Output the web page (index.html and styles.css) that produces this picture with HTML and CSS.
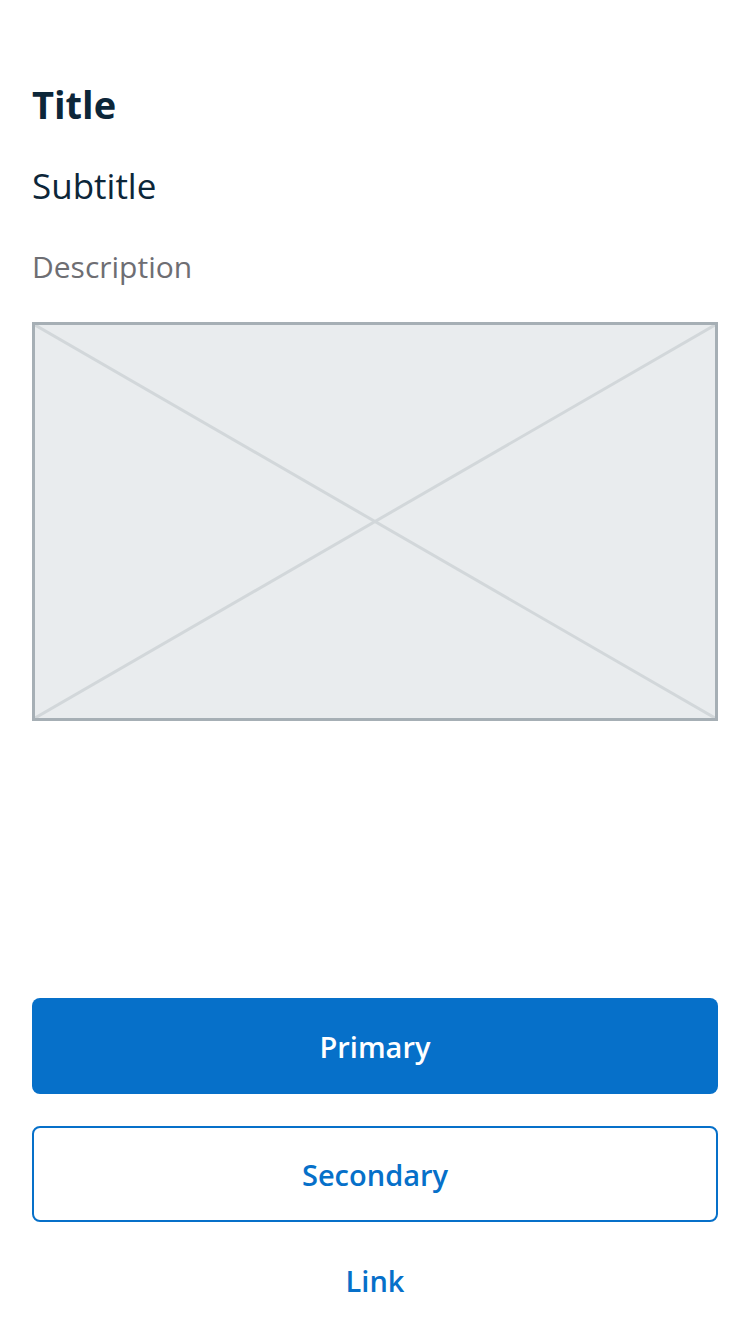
FILE: index.html
```html
<!DOCTYPE html>
<html>
<head>
<meta charset="utf-8">
<link rel="stylesheet" href="styles.css">
</head>
<body>
<div class="page">
  <div class="content">
    <h1 class="title">Title</h1>
    <h2 class="subtitle">Subtitle</h2>
    <p class="description">Description</p>
    <div class="placeholder">
      <svg class="cross" viewBox="0 0 100 100" preserveAspectRatio="none">
        <line x1="0" y1="0" x2="100" y2="100" vector-effect="non-scaling-stroke"/>
        <line x1="100" y1="0" x2="0" y2="100" vector-effect="non-scaling-stroke"/>
      </svg>
    </div>
  </div>
  <div class="actions">
    <button class="btn btn-primary">Primary</button>
    <button class="btn btn-secondary">Secondary</button>
    <a class="btn btn-link" href="#">Link</a>
  </div>
</div>
</body>
</html>
```

FILE: styles.css
```css
* { box-sizing: border-box; }
html, body { margin: 0; padding: 0; background: #fff; }
body { font-family: "Open Sans", "Lato", sans-serif; }
.page {
  width: 750px;
  height: 1334px;
  padding: 84px 32px 6px;
  display: flex;
  flex-direction: column;
}
.content { display: flex; flex-direction: column; }
.title {
  margin: 0;
  font-size: 38px;
  line-height: 40px;
  font-weight: 700;
  color: #0c2639;
}
.subtitle {
  margin: 42px 0 0;
  font-size: 35px;
  line-height: 40px;
  font-weight: 400;
  color: #0c2639;
}
.description {
  margin: 41px 0 0;
  font-size: 30px;
  line-height: 40px;
  color: #6e6e73;
}
.placeholder {
  margin-top: 35px;
  height: 399px;
  border: 3px solid #a6afb5;
  background: #e9ecee;
}
.cross { display: block; width: 100%; height: 100%; }
.cross line { stroke: #d2d7da; stroke-width: 3; }
.actions {
  margin-top: auto;
  display: flex;
  flex-direction: column;
}
.btn {
  display: flex;
  align-items: center;
  justify-content: center;
  height: 96px;
  width: 100%;
  font-family: inherit;
  font-size: 29px;
  font-weight: 600;
  border-radius: 8px;
  text-decoration: none;
  cursor: pointer;
}
.btn-primary {
  background: #0670c9;
  color: #fff;
  border: none;
}
.btn-secondary {
  margin-top: 32px;
  background: #fff;
  color: #0670c9;
  border: 2px solid #0670c9;
}
.btn-link {
  margin-top: 10px;
  color: #0670c9;
  background: transparent;
}
```
